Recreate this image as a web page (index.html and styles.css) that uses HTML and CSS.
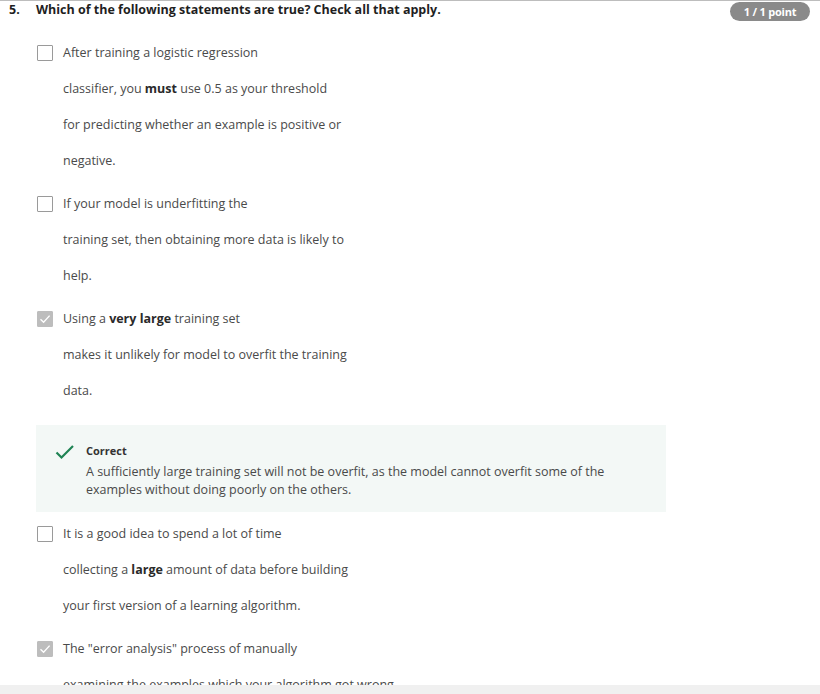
FILE: index.html
```html
<!DOCTYPE html>
<html>
<head>
<meta charset="utf-8">
<link rel="stylesheet" href="styles.css">
</head>
<body>
<div class="question">
  <div class="qhead">
    <span class="qnum">5.</span>
    <span class="qtitle">Which of the following statements are true? Check all that apply.</span>
    <span class="badge">1 / 1 point</span>
  </div>
  <div class="options">
    <div class="option">
      <span class="box"></span>
      <div class="text">
        <div class="line">After training a logistic regression</div>
        <div class="line">classifier, you <b>must</b> use 0.5 as your threshold</div>
        <div class="line">for predicting whether an example is positive or</div>
        <div class="line">negative.</div>
      </div>
    </div>
    <div class="option">
      <span class="box"></span>
      <div class="text">
        <div class="line">If your model is underfitting the</div>
        <div class="line">training set, then obtaining more data is likely to</div>
        <div class="line">help.</div>
      </div>
    </div>
    <div class="option">
      <span class="box checked"><svg viewBox="0 0 16 16" width="16" height="16"><path d="M3.5 8.2 L6.6 11.2 L12.6 4.6" fill="none" stroke="#fff" stroke-width="1.4"/></svg></span>
      <div class="text">
        <div class="line">Using a <b>very large</b> training set</div>
        <div class="line">makes it unlikely for model to overfit the training</div>
        <div class="line">data.</div>
      </div>
    </div>
    <div class="feedback">
      <svg class="ok" viewBox="0 0 20 16" width="20" height="16"><path d="M1.5 8.5 L6.5 13.5 L18 2" fill="none" stroke="#1f8354" stroke-width="2.2"/></svg>
      <div class="fbody">
        <div class="fhead">Correct</div>
        <div class="ftext">A sufficiently large training set will not be overfit, as the model cannot overfit some of the examples without doing poorly on the others.</div>
      </div>
    </div>
    <div class="option">
      <span class="box"></span>
      <div class="text">
        <div class="line">It is a good idea to spend a lot of time</div>
        <div class="line">collecting a <b>large</b> amount of data before building</div>
        <div class="line">your first version of a learning algorithm.</div>
      </div>
    </div>
    <div class="option last">
      <span class="box checked"><svg viewBox="0 0 16 16" width="16" height="16"><path d="M3.5 8.2 L6.6 11.2 L12.6 4.6" fill="none" stroke="#fff" stroke-width="1.4"/></svg></span>
      <div class="text">
        <div class="line">The "error analysis" process of manually</div>
        <div class="line short">examining the examples which your algorithm got wrong</div>
      </div>
    </div>
  </div>
</div>
<div class="bottombar"></div>
</body>
</html>
```
FILE: styles.css
```css
html, body {
  margin: 0;
  padding: 0;
  background: #fff;
}
body {
  font-family: "Open Sans", "Liberation Sans", sans-serif;
  color: #373a3c;
  overflow: hidden;
  height: 694px;
}
.question {
  border-top: 1px solid #bdbdbd;
}
.qhead {
  display: flex;
  align-items: flex-start;
  height: 20px;
  padding: 0 10px 0 9px;
}
.qnum {
  width: 27px;
  font-weight: 700;
  font-size: 12.5px;
  line-height: 17px;
  color: #1f1f1f;
}
.qtitle {
  flex: 1;
  font-weight: 700;
  font-size: 12.5px;
  line-height: 17px;
  color: #1f1f1f;
}
.badge {
  margin-top: 1px;
  background: #8a8a8a;
  color: #fff;
  font-size: 11px;
  font-weight: 700;
  border-radius: 10px;
  height: 19px;
  line-height: 19px;
  width: 80px;
  text-align: center;
  letter-spacing: -0.2px;
}
.options {
  padding: 14px 0 0 36px;
}
.option {
  display: flex;
  margin-bottom: 7px;
}
.option.last {
  margin-bottom: 0;
}
.box {
  width: 14px;
  height: 14px;
  border: 1px solid #9a9a9a;
  border-radius: 1px;
  margin: 10px 10px 0 1px;
  flex: none;
  background: #fff;
  position: relative;
}
.box.checked {
  background: #bdbdbd;
  border-color: #bdbdbd;
}
.box svg {
  position: absolute;
  left: -1px;
  top: -1px;
}
.text {
  font-size: 12.5px;
  color: #4a4a4a;
}
.line {
  height: 36px;
  line-height: 36px;
}
.line.short {
  height: 30px;
}
.text b {
  font-weight: 700;
  color: #2a2a2a;
}
.feedback {
  margin: 16px 0 4px 0;
  width: 630px;
  height: 87px;
  box-sizing: border-box;
  background: #f3f8f6;
  display: flex;
  padding: 19px 0 0 19px;
}
.ok {
  flex: none;
  margin-right: 11px;
}
.fhead {
  font-size: 11px;
  font-weight: 700;
  color: #333;
  line-height: 14px;
  margin-bottom: 5px;
}
.ftext {
  font-size: 12.5px;
  line-height: 18px;
  color: #4a4a4a;
  width: 540px;
}
.bottombar {
  position: fixed;
  left: 0;
  right: 0;
  bottom: 0;
  height: 9px;
  background: #f0f0f0;
}
```
